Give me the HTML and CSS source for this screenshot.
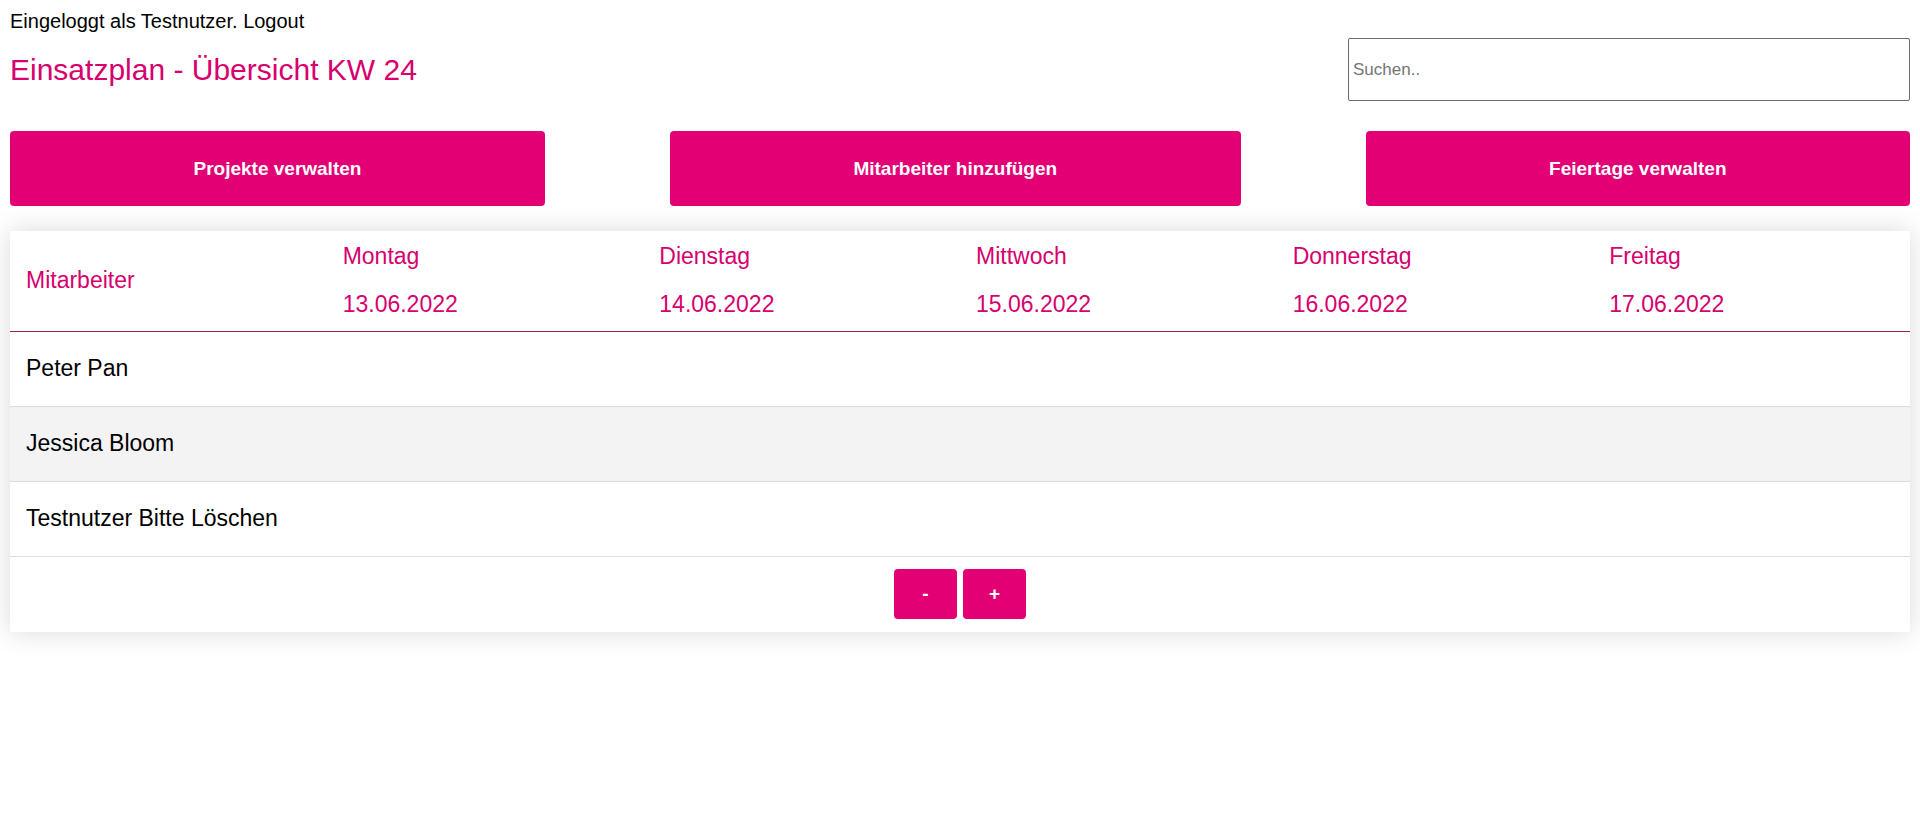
FILE: index.html
```html
<!DOCTYPE html>
<html lang="de">
<head>
<meta charset="utf-8">
<title>Einsatzplan</title>
<link rel="stylesheet" href="styles.css">
</head>
<body>
<div class="session">Eingeloggt als Testnutzer. <a class="session-link" href="#">Logout</a></div>
<header class="page-header">
  <h1 class="page-title">Einsatzplan - Übersicht KW 24</h1>
  <input class="search" type="text" placeholder="Suchen.." aria-label="Suchen">
</header>
<nav class="actions">
  <button class="button action" type="button">Projekte verwalten</button>
  <button class="button action" type="button">Mitarbeiter hinzufügen</button>
  <button class="button action" type="button">Feiertage verwalten</button>
</nav>
<section class="card">
  <table class="plan">
    <thead>
      <tr>
        <th>Mitarbeiter</th>
        <th>Montag<br><br>13.06.2022</th>
        <th>Dienstag<br><br>14.06.2022</th>
        <th>Mittwoch<br><br>15.06.2022</th>
        <th>Donnerstag<br><br>16.06.2022</th>
        <th>Freitag<br><br>17.06.2022</th>
      </tr>
    </thead>
    <tbody>
      <tr><td>Peter Pan</td><td></td><td></td><td></td><td></td><td></td></tr>
      <tr><td>Jessica Bloom</td><td></td><td></td><td></td><td></td><td></td></tr>
      <tr><td>Testnutzer Bitte Löschen</td><td></td><td></td><td></td><td></td><td></td></tr>
    </tbody>
  </table>
  <div class="pager">
    <button class="button pager-button" type="button" aria-label="Vorherige Woche">-</button>
    <button class="button pager-button" type="button" aria-label="Nächste Woche">+</button>
  </div>
</section>
</body>
</html>
```
FILE: styles.css
```css
body {
  box-sizing: border-box;
  min-height: 100vh;
  margin: 0;
  padding: 10px;
  background: #fff;
  color: #000;
  font-family: "Liberation Sans", Arial, sans-serif;
  font-size: 20px;
  line-height: 24px;
}

.session {
  line-height: 22px;
}

.session-link {
  color: inherit;
  text-decoration: none;
}

.page-header {
  display: flex;
  align-items: center;
  justify-content: space-between;
  margin-top: 6px;
}

.page-title {
  margin: 0;
  color: #d6006e;
  font-size: 30px;
  font-weight: 400;
  line-height: 36px;
}

.search {
  box-sizing: border-box;
  width: 562px;
  max-width: 50%;
  height: 63px;
  padding: 0 4px;
  border: 1px solid #6b6b6b;
  border-radius: 2px;
  font-family: inherit;
  font-size: 17px;
}

.search::placeholder {
  color: #757575;
}

.button {
  border: 0;
  border-radius: 4px;
  background: #e20074;
  color: #fff;
  font-family: inherit;
  font-size: 19px;
  font-weight: 700;
  cursor: pointer;
}

.actions {
  display: flex;
  gap: 125px;
  margin: 30px 0 25px;
}

.action {
  flex: 1 1 auto;
  height: 75px;
  padding: 0;
}

.card {
  background: #fff;
  box-shadow: 0 0 25px rgba(0, 0, 0, 0.15);
}

.plan {
  width: 100%;
  table-layout: fixed;
  border-collapse: separate;
  border-spacing: 0;
  font-size: 23px;
}

.plan th,
.plan td {
  box-sizing: border-box;
  height: 75px;
  padding: 0 16px 2px;
  border-bottom: 1px solid #ddd;
  text-align: left;
}

.plan th {
  height: 101px;
  border-bottom-color: #9b1c63;
  color: #d6006e;
  font-weight: 400;
}

.plan tbody tr:nth-child(even) {
  background: #f3f3f3;
}

.pager {
  display: flex;
  justify-content: center;
  gap: 6px;
  padding: 12px 0 13px;
}

.pager-button {
  width: 63px;
  height: 50px;
  padding: 0;
}
```
